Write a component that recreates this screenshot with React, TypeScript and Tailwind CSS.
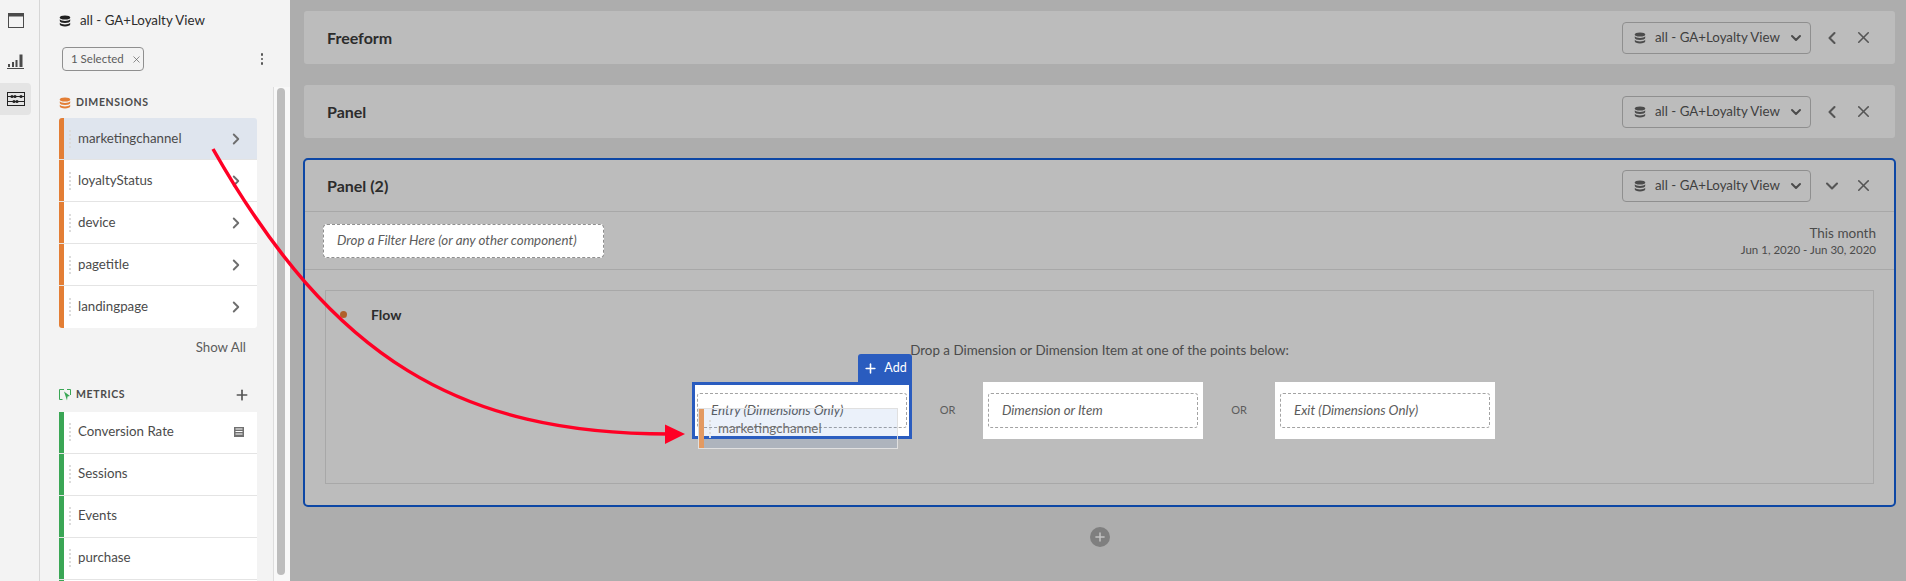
import React from 'react';
import { ChevronDown, ChevronLeft, ChevronRight, Plus, X } from 'lucide-react';

const dimensions = ['marketingchannel', 'loyaltyStatus', 'device', 'pagetitle', 'landingpage'];
const metrics = ['Conversion Rate', 'Sessions', 'Events', 'purchase', 'Orders'];

const DbIcon = ({ className }: { className?: string }) => (
  <svg viewBox="0 0 12 12" width="12" height="12" className={className} fill="currentColor">
    <ellipse cx="6" cy="2.4" rx="5.2" ry="2" />
    <path d="M.8 4.2C1.6 5.4 3.6 5.9 6 5.900s4.400-.5 5.200-1.700V6c0 1.100-2.300 2-5.200 2S.8 7.100.8 6z" />
    <path d="M.8 7.800C1.600 9 3.600 9.500 6 9.500s4.400-.5 5.200-1.700v1.800c0 1.100-2.300 1.900-5.200 1.900S.8 10.700.8 9.600z" />
  </svg>
);

const Row = ({ label, bar, active, chevron, calc }: { label: string; bar: string; active?: boolean; chevron?: boolean; calc?: boolean }) => (
  <div className={`flex h-[42px] items-center border-b border-[#e4e4e4] last:border-b-0 ${active ? 'bg-[#dfe5ee]' : 'bg-white'}`}>
    <div className={`h-full w-[5px] shrink-0 ${bar}`} />
    <div className="ml-[5px] h-[18px] w-[2px] shrink-0 border-l-2 border-dotted border-[#dcdcdc]" />
    <span className="ml-[7px] flex-1 text-[13.300px] text-[#4b4b4b]">{label}</span>
    {chevron && <ChevronRight size={18} strokeWidth={2.5} className="mr-[12px] text-[#6e6e6e]" />}
    {calc && (
      <svg viewBox="0 0 10 10" width="10" height="10" className="mr-[13px] text-[#707070]" fill="currentColor">
        <path d="M0 0h10v10H0zM1.500 1.500v1h7v-1zm0 2.500v1h7V4zm0 2.500v1h7v-1z" fillRule="evenodd" />
      </svg>
    )}
  </div>
);

const PickerRow = ({ collapsed }: { collapsed?: boolean }) => (
  <div className="flex items-center">
    <div className="flex h-[32px] w-[189px] items-center rounded-[4px] border border-[#8f8f8f] pl-[11px] text-[#4b4b4b]">
      <DbIcon />
      <span className="ml-[9px] text-[13.300px] text-[#3f3f3f]">all - GA+Loyalty View</span>
      <ChevronDown size={16} strokeWidth={3} className="ml-[8px]" />
    </div>
    {collapsed ? (
      <ChevronDown size={20} strokeWidth={2.5} className="ml-[11px] text-[#555555]" />
    ) : (
      <ChevronLeft size={20} strokeWidth={2.5} className="ml-[11px] text-[#555555]" />
    )}
    <X size={19} strokeWidth={2} className="ml-[12px] mr-[21px] text-[#555555]" />
  </div>
);

const DropZone = ({ label, active }: { label: string; active?: boolean }) => (
  <div className={`relative h-[57px] w-[220px] bg-white ${active ? 'border-[3px] border-[#2a5cbf] px-[2px] pt-[8px]' : 'px-[5px] pt-[11px]'}`}>
    <div className="flex h-[35px] items-center rounded-[3px] border border-dashed border-[#a3a3a3] pl-[13px] text-[13.300px] italic text-[#5c5c5c]">
      {label}
    </div>
    {active && (
      <div className="absolute right-[-3px] top-[-31px] flex h-[28px] w-[54px] items-center justify-center gap-[6px] rounded-t-[3px] bg-[#2a5cbf] text-[12.500px] text-white">
        <Plus size={15} strokeWidth={2.5} />
        Add
      </div>
    )}
  </div>
);

export default function App() {
  return (
    <div className="relative flex h-[581px] w-[1906px] overflow-hidden bg-[#adadad] font-['Lato','Noto_Sans',sans-serif]">
      {/* rail */}
      <div className="flex w-[40px] shrink-0 flex-col border-r border-[#d6d6d6] bg-[#f3f3f3] pr-[8px] text-[#4b4b4b]">
        <div className="flex h-[38px] items-center justify-center pt-[2px]">
          <svg viewBox="0 0 16 15" width="16" height="15" fill="none" stroke="currentColor">
            <rect x=".5" y=".5" width="15" height="14" />
            <rect x=".5" y=".5" width="15" height="2.500" fill="currentColor" />
          </svg>
        </div>
        <div className="flex h-[45px] items-center justify-center">
          <svg viewBox="0 0 17 16" width="17" height="16" fill="currentColor">
            <path d="M1 11h2v3H1zM5 9h2v5H5zM8.500 7h2v7h-2zM12.500 1.500h3V14h-3zM0 15h17v1H0z" />
          </svg>
        </div>
        <div className="flex h-[32px] items-center justify-center rounded-r-[4px] bg-[#e4e4e4]">
          <svg viewBox="0 0 18 14" width="18" height="14" fill="none" stroke="#222222">
            <rect x=".5" y=".5" width="17" height="13" />
            <path d="M1 4.500h16M1 9.500h16" />
            <g fill="#222222" stroke="none">
              <circle cx="5" cy="4.500" r="1.600" /><circle cx="8" cy="4.500" r="1.600" /><circle cx="14" cy="4.500" r="1.600" />
              <circle cx="7" cy="9.500" r="1.600" /><circle cx="10" cy="9.500" r="1.600" />
            </g>
          </svg>
        </div>
      </div>

      {/* component panel */}
      <div className="flex w-[250px] shrink-0 bg-[#f3f3f3]">
        <div className="w-[233px] shrink-0 pl-[19px]">
          <div className="flex h-[42px] items-center text-[#1f1f1f]">
            <DbIcon />
            <span className="ml-[9px] text-[13.300px] text-[#2c2c2c]">all - GA+Loyalty View</span>
          </div>
          <div className="mt-[5px] flex h-[24px] items-center">
            <div className="ml-[3px] flex h-[24px] w-[82px] items-center whitespace-nowrap rounded-[4px] border border-[#8f8f8f] pl-[8px] text-[11.500px] text-[#5c5c5c]">
              1 Selected
              <X size={11} strokeWidth={1.5} className="ml-[7px]" />
            </div>
            <div className="ml-auto mr-[10px] flex flex-col gap-[2px]">
              <span className="h-[2.500px] w-[2.500px] rounded-full bg-[#555555]" />
              <span className="h-[2.500px] w-[2.500px] rounded-full bg-[#555555]" />
              <span className="h-[2.500px] w-[2.500px] rounded-full bg-[#555555]" />
            </div>
          </div>
          <div className="mt-[23px] flex h-[18px] items-center">
            <DbIcon className="text-[#e37e35]" />
            <span className="ml-[5px] text-[10.500px] font-bold tracking-[0.06em] text-[#4b4b4b]">DIMENSIONS</span>
          </div>
          <div className="mt-[6px] w-[198px] overflow-hidden rounded-[3px]">
            {dimensions.map((d, i) => (
              <Row key={d} label={d} bar="bg-[#e37e35]" active={i === 0} chevron />
            ))}
          </div>
          <div className="mr-[27px] mt-[10px] text-right text-[13.300px] text-[#5c5c5c]">Show All</div>
          <div className="mt-[28px] flex h-[18px] w-[198px] items-center">
            <svg viewBox="0 0 12 12" width="12" height="12" fill="none" className="text-[#3aa655]">
              <path d="M5 .5H.5v10h3M8 .5h3.500V6" stroke="currentColor" />
              <path d="M5 2.500l6 4.500-2.500.6L8 11.500z" fill="currentColor" />
            </svg>
            <span className="ml-[5px] text-[10.500px] font-bold tracking-[0.06em] text-[#4b4b4b]">METRICS</span>
            <Plus size={16} strokeWidth={2.5} className="ml-auto mr-[7px] text-[#555555]" />
          </div>
          <div className="mt-[8px] w-[198px] rounded-[3px]">
            {metrics.map((m, i) => (
              <Row key={m} label={i === 4 ? '' : m} bar="bg-[#3aa655]" calc={i === 0} />
            ))}
          </div>
        </div>
        <div className="mt-[87px] flex w-[17px] shrink-0 justify-center border-l border-[#dddddd] bg-[#f8f8f8] pl-[1px] pr-[4px] pt-[1px]">
          <div className="h-[487px] w-[8px] rounded-full bg-[#bdbdbd]" />
        </div>
      </div>

      {/* workspace */}
      <div className="flex min-w-0 flex-1 flex-col pl-[14px] pr-[11px] pt-[11px]">
        {['Freeform', 'Panel'].map(title => (
          <div key={title} className="mb-[21px] flex h-[53px] items-center justify-between rounded-[3px] bg-[#bcbcbc] pl-[23px]">
            <span className="text-[16px] font-bold text-[#2c2c2c]">{title}</span>
            <div className="mr-[1px]"><PickerRow /></div>
          </div>
        ))}
        <div className="ml-[-1px] mr-[-1px] mt-[-1px] h-[349px] rounded-[5px] border-2 border-[#0d47a5] bg-[#bcbcbc]">
          <div className="flex h-[52px] items-center justify-between border-b border-[#a8a8a8] pl-[22px]">
            <span className="text-[16px] font-bold text-[#2c2c2c]">Panel (2)</span>
            <PickerRow collapsed />
          </div>
          <div className="flex h-[58px] items-center justify-between border-b border-[#a8a8a8] px-[18px]">
            <div className="flex h-[34px] w-[281px] items-center rounded-[4px] border border-dashed border-[#8f8f8f] bg-white pl-[13px] text-[13.300px] italic text-[#5c5c5c]">
              Drop a Filter Here (or any other component)
            </div>
            <div className="text-right text-[#4b4b4b]">
              <div className="text-[13.500px] leading-[18px]">This month</div>
              <div className="text-[11.500px] leading-[16px]">Jun 1, 2020 - Jun 30, 2020</div>
            </div>
          </div>
          <div className="mx-[20px] mt-[20px] h-[194px] border border-[#a8a8a8] pl-[14px]">
            <div className="flex h-[46px] items-center">
              <span className="h-[7px] w-[7px] rounded-full bg-[#b0602a]" />
              <span className="ml-[24px] text-[14px] font-bold text-[#2c2c2c]">Flow</span>
            </div>
            <div className="ml-[-14px] mt-[3px] text-center text-[13.400px] text-[#4b4b4b]">
              Drop a Dimension or Dimension Item at one of the points below:
            </div>
            <div className="ml-[-14px] mt-[22px] flex items-center justify-center pr-[12px]">
              <DropZone label="Entry (Dimensions Only)" active />
              <span className="w-[71px] text-center text-[11px] text-[#5c5c5c]">OR</span>
              <DropZone label="Dimension or Item" />
              <span className="w-[72px] text-center text-[11px] text-[#5c5c5c]">OR</span>
              <DropZone label="Exit (Dimensions Only)" />
            </div>
          </div>
        </div>
        <div className="mt-[20px] flex justify-center">
          <div className="flex h-[20px] w-[20px] items-center justify-center rounded-full bg-[#7f7f7f] text-[#c4c4c4]">
            <Plus size={14} strokeWidth={2.5} />
          </div>
        </div>
      </div>

      {/* item being dragged */}
      <div className="absolute left-[698px] top-[408px] flex h-[41px] w-[200px] items-center border border-[#e0e0e0] bg-[rgba(55,115,205,0.1)]">
        <div className="h-full w-[5px] bg-[#e39a62]" />
        <div className="ml-[5px] h-[18px] w-[2px] border-l-2 border-dotted border-[#dcdcdc]" />
        <span className="ml-[7px] text-[13.300px] text-[#6e6e6e]">marketingchannel</span>
      </div>

      {/* annotation arrow */}
      <svg className="absolute left-0 top-0" width="1906" height="581" fill="none">
        <path d="M213 149C333 360 460 434 670 434" stroke="#ff0025" strokeWidth="3.500" />
        <path d="M665 424.500L685 434L665 444z" fill="#ff0025" />
      </svg>
    </div>
  );
}
